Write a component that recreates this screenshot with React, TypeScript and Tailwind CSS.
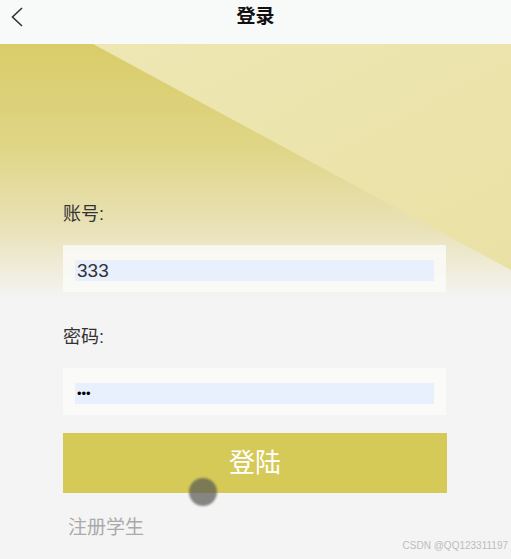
function Field({ label, value, type }: { label: string; value: string; type: string }) {
  return (
    <div className="flex flex-col">
      <span className="text-[18px] leading-[26px] text-[#333]">{label}</span>
      <div className="mt-[18px] h-[47px] w-[383px] bg-[rgba(250,250,248,0.85)] px-[12px] py-[15px]">
        <input
          type={type}
          defaultValue={value}
          readOnly
          className={
            type === "password"
              ? "block h-[21px] w-full bg-[#e8f0fe] px-[2px] text-[13px] text-black outline-none"
              : "block h-[21px] w-full bg-[#e8f0fe] px-[2px] text-[19px] leading-[21px] text-[#333] outline-none"
          }
        />
      </div>
    </div>
  )
}

export default function App() {
  return (
    <div className="relative h-[559px] w-[511px] overflow-hidden bg-[#f4f4f4] font-['Liberation_Sans','Noto_Sans_CJK_SC',sans-serif]">
      {/* header */}
      <div className="grid h-[44px] grid-cols-[44px_1fr_44px] items-start bg-[#f8f9f9]">
        <svg width="44" height="34" viewBox="0 0 44 34">
          <path d="M22 8 L12.5 17 L22 26" fill="none" stroke="#333" strokeWidth="1.6" />
        </svg>
        <span className="pt-[5px] text-center text-[19px] font-bold leading-[24px] text-[#111]">登录</span>
        <span />
      </div>

      {/* body */}
      <div className="relative h-[515px] bg-[linear-gradient(to_bottom,#d9cc69_0px,#dfd585_100px,#e9e2b8_185px,#f4f4f4_255px)]">
        <svg className="absolute left-0 top-0" width="511" height="240" viewBox="0 0 511 240">
          <defs>
            <linearGradient id="tri" x1="0" y1="0" x2="1" y2="1">
              <stop offset="0" stopColor="#eee7b4" />
              <stop offset="1" stopColor="#e9e1a4" />
            </linearGradient>
          </defs>
          <polygon points="93,0 511,0 511,226" fill="url(#tri)" />
        </svg>

        <div className="relative flex flex-col pl-[63px] pt-[157px]">
          <Field label="账号:" value="333" type="text" />
          <div className="mt-[32px]">
            <Field label="密码:" value="333" type="password" />
          </div>
          <button className="mt-[18px] flex h-[60px] w-[384px] items-center justify-center bg-[#d5c957] text-[26px] text-white">
            登陆
          </button>
          <span className="ml-[5px] mt-[22px] text-[19px] leading-[26px] text-[#aaa]">注册学生</span>
        </div>

        {/* touch indicator */}
        <div className="absolute left-[189px] top-[434px] h-[28px] w-[28px] rounded-full bg-[rgba(90,90,85,0.72)] blur-[1px]" />
      </div>

      <span className="absolute bottom-[6px] right-[3px] text-[10px] text-[#bdbdbd]">CSDN @QQ123311197</span>
    </div>
  )
}
